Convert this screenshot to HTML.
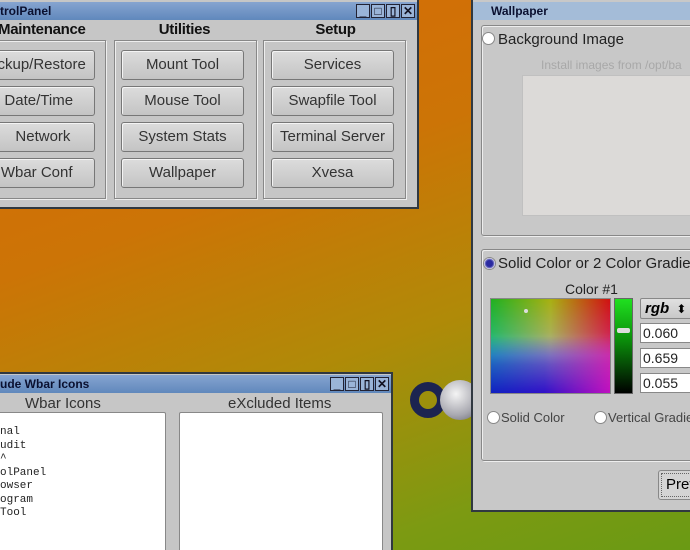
<!DOCTYPE html>
<html><head><style>
*{margin:0;padding:0;box-sizing:border-box}
html,body{width:690px;height:550px;overflow:hidden}
html{background:#7a9a12}
body{position:relative;font-family:"Liberation Sans",sans-serif;background:linear-gradient(160deg,#d86a06 0%,#cc7406 35%,#b08a08 60%,#7c9a12 85%,#6a9a14 100%)}
.win{position:absolute;background:#c6c6c6;border:2px solid #303840}
.tb{position:absolute;left:0;right:0;top:0;height:18px;background:linear-gradient(#86a4d0,#6088bc);font-weight:bold;font-size:12px;color:#0a1030;line-height:18px}
.ctl{position:absolute;top:2px;right:2px;display:flex;gap:1px}
.ctl span{width:14px;height:14px;border:1px solid #223;background:#9ab4d8;font-size:12px;line-height:12px;text-align:center;color:#112}
.grp{position:absolute;border:1px solid #888;box-shadow:inset 1px 1px #eee,1px 1px #eee}
.h{position:absolute;font-size:15px;font-weight:bold;color:#111;text-align:center;letter-spacing:-0.3px}
.btn{position:absolute;height:30px;background:linear-gradient(#dcdcdc,#c4c4c4);border:1px solid #777;border-radius:3px;box-shadow:inset 1px 1px #f4f4f4;font-size:15px;color:#333;text-align:center;line-height:28px}
.t{position:absolute;font-size:14px;color:#222}
.radio{position:absolute;width:13px;height:13px;border-radius:50%;background:#fff;border:1px solid #888}
.fld{position:absolute;left:640px;width:60px;height:20px;background:#fff;border:1px solid #888;font-size:14px;line-height:18px;padding-left:2px;color:#222}
.pk div{position:absolute;inset:0}
</style></head><body>

<!-- logo -->
<div style="position:absolute;left:410px;top:382px;width:36px;height:36px;border-radius:50%;border:9px solid #1c2450;"></div>
<div style="position:absolute;left:440px;top:380px;width:40px;height:40px;border-radius:50%;background:radial-gradient(circle at 40% 35%,#f4f4f4,#a8a8b0 60%,#60606c)"></div>

<!-- Control panel -->
<div class="win" style="left:-4px;top:-2px;width:423px;height:211px">
 <div class="tb" style="top:2px"><span style="margin-left:2px">trolPanel</span>
  <div class="ctl"><span>_</span><span>□</span><span>▯</span><span>✕</span></div></div>
 <div class="h" style="left:0;width:86px;top:21px">Maintenance</div>
 <div class="h" style="left:120px;width:133px;top:21px">Utilities</div>
 <div class="h" style="left:268px;width:139px;top:21px">Setup</div>
 <div class="grp" style="left:0;top:40px;width:108px;height:159px"></div>
 <div class="grp" style="left:116px;top:40px;width:143px;height:159px"></div>
 <div class="grp" style="left:265px;top:40px;width:143px;height:159px"></div>
</div>
<div class="btn" style="left:-30px;top:50px;width:125px">Backup/Restore</div>
<div class="btn" style="left:-30px;top:86px;width:125px">&nbsp;&nbsp;&nbsp;Date/Time</div>
<div class="btn" style="left:-30px;top:122px;width:125px">&nbsp;&nbsp;&nbsp;&nbsp;&nbsp;Network</div>
<div class="btn" style="left:-30px;top:158px;width:125px">&nbsp;&nbsp;Wbar Conf</div>
<div class="btn" style="left:121px;top:50px;width:123px">Mount Tool</div>
<div class="btn" style="left:121px;top:86px;width:123px">Mouse Tool</div>
<div class="btn" style="left:121px;top:122px;width:123px">System Stats</div>
<div class="btn" style="left:121px;top:158px;width:123px">Wallpaper</div>
<div class="btn" style="left:271px;top:50px;width:123px">Services</div>
<div class="btn" style="left:271px;top:86px;width:123px">Swapfile Tool</div>
<div class="btn" style="left:271px;top:122px;width:123px">Terminal Server</div>
<div class="btn" style="left:271px;top:158px;width:123px">Xvesa</div>

<!-- Wbar window -->
<div class="win" style="left:-4px;top:372px;width:397px;height:190px">
 <div class="tb" style="top:1px"><span style="margin-left:2px">ude Wbar Icons</span>
  <div class="ctl"><span>_</span><span>□</span><span>▯</span><span>✕</span></div></div>
</div>
<div class="t" style="left:25px;top:395px;font-size:15px;color:#333">Wbar Icons</div>
<div class="t" style="left:228px;top:395px;font-size:15px;color:#333">eXcluded Items</div>
<div style="position:absolute;left:-2px;top:412px;width:168px;height:140px;background:#fff;border:1px solid #888;border-radius:2px"></div>
<div style="position:absolute;left:179px;top:412px;width:204px;height:140px;background:#fff;border:1px solid #888;border-radius:2px"></div>
<div style="position:absolute;left:0;top:426px;font-family:'Liberation Mono',monospace;font-size:11px;line-height:13.5px;color:#222">nal<br>udit<br>^<br>olPanel<br>owser<br>ogram<br>Tool</div>

<!-- Wallpaper window -->
<div class="win" style="left:471px;top:-2px;width:225px;height:514px;background:#c8c8c8">
 <div class="tb" style="top:2px;background:#a4bcd8;padding-left:18px">Wallpaper</div>
</div>
<div class="grp" style="left:481px;top:25px;width:215px;height:211px;border-radius:3px"></div>
<div class="radio" style="left:482px;top:32px"></div>
<div class="t" style="left:498px;top:31px;font-size:15px">Background Image</div>
<div class="t" style="left:541px;top:58px;font-size:12px;color:#a8a8a8;white-space:nowrap">Install images from /opt/ba</div>
<div style="position:absolute;left:522px;top:75px;width:180px;height:141px;background:#dcdad8;border:1px solid #c0c0c0"></div>
<div class="grp" style="left:481px;top:249px;width:215px;height:212px;border-radius:3px"></div>
<div class="radio" style="left:483px;top:257px;background:radial-gradient(circle,#2a2aa0 40%,#8888cc 60%,#fff 70%)"></div>
<div class="t" style="left:498px;top:255px;font-size:15px;white-space:nowrap">Solid Color or 2 Color Gradien</div>
<div class="t" style="left:565px;top:281px">Color #1</div>
<div class="pk" style="position:absolute;left:490px;top:298px;width:121px;height:96px;border:1px solid #888;overflow:hidden;background:linear-gradient(to right,#30c0c0,#a8b0b8 50%,#d040a0)">
 <div style="background:linear-gradient(to right,#20b020,#a8b010 50%,#d01010);-webkit-mask:linear-gradient(to bottom,#000 0%,rgba(0,0,0,.6) 35%,transparent 60%);mask:linear-gradient(to bottom,#000 0%,rgba(0,0,0,.6) 35%,transparent 60%)"></div>
 <div style="background:linear-gradient(to right,#1020c0,#3010c8 45%,#c010c0);-webkit-mask:linear-gradient(to top,#000 0%,rgba(0,0,0,.6) 30%,transparent 60%);mask:linear-gradient(to top,#000 0%,rgba(0,0,0,.6) 30%,transparent 60%)"></div>
 <div style="left:33px;top:10px;width:4px;height:4px;border-radius:50%;background:#ddd;inset:auto;left:33px;top:10px"></div>
</div>
<div style="position:absolute;left:614px;top:298px;width:19px;height:96px;border:1px solid #666;background:linear-gradient(#20e020,#0a8a0a 45%,#000)"><div style="position:absolute;left:2px;top:29px;width:13px;height:5px;background:#ddd;border-radius:2px"></div></div>
<div style="position:absolute;left:640px;top:298px;width:56px;height:21px;border:1px solid #888;background:linear-gradient(#e0e0e0,#c8c8c8);border-radius:2px;font-size:15px;font-weight:bold;font-style:italic;padding-left:4px;line-height:19px">rgb <span style="font-style:normal;font-weight:normal;font-size:12px;margin-left:3px">⬍</span></div>
<div class="fld" style="top:323px">0.060</div>
<div class="fld" style="top:348px">0.659</div>
<div class="fld" style="top:373px">0.055</div>
<div class="radio" style="left:487px;top:411px"></div>
<div class="t" style="left:501px;top:410px;font-size:13px;color:#444">Solid Color</div>
<div class="radio" style="left:594px;top:411px"></div>
<div class="t" style="left:608px;top:410px;font-size:13px;white-space:nowrap;color:#444">Vertical Gradie</div>
<div style="position:absolute;left:658px;top:470px;width:40px;height:30px;border:1px solid #888;background:#d4d4d4;outline:1px dotted #666;outline-offset:-4px;border-radius:3px;font-size:15px;line-height:28px;padding-left:7px">Prev</div>
</body></html>
